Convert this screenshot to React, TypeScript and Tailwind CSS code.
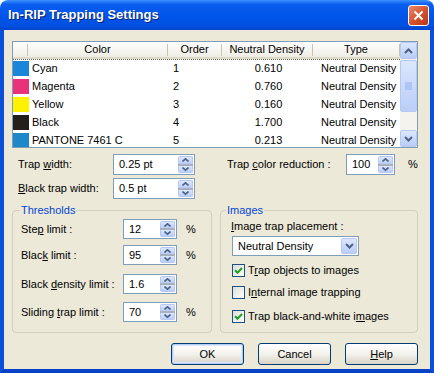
import type { ReactNode } from "react";

type Ink = {
  name: string;
  order: string;
  density: string;
  swatch: string;
};

const inks: Ink[] = [
  { name: "Cyan", order: "1", density: "0.610", swatch: "bg-[#1b86d8]" },
  { name: "Magenta", order: "2", density: "0.760", swatch: "bg-[#e9327a]" },
  { name: "Yellow", order: "3", density: "0.160", swatch: "bg-[#fff200]" },
  { name: "Black", order: "4", density: "1.700", swatch: "bg-[#221f1c]" },
  { name: "PANTONE 7461 C", order: "5", density: "0.213", swatch: "bg-[#1d88c9]" },
];

function Chevron({ dir }: { dir: "up" | "down" }) {
  return (
    <svg width="9" height="6" viewBox="0 0 9 6">
      <path
        d={dir === "up" ? "M1 5 L4.5 1.5 L8 5" : "M1 1 L4.5 4.5 L8 1"}
        fill="none"
        stroke="#4d6185"
        strokeWidth="2"
      />
    </svg>
  );
}

function BlueButton({ children, className }: { children?: ReactNode; className: string }) {
  return (
    <div
      className={`flex items-center justify-center rounded-[2px] border border-[#b6c8f2] bg-gradient-to-b from-[#dce7fe] to-[#b9cdf7] ${className}`}
    >
      {children}
    </div>
  );
}

function Spin() {
  return (
    <div className="flex h-full w-[16px] flex-col py-[1px] pr-[1px]">
      <BlueButton className="flex-1 rounded-b-none border-b-0">
        <svg width="7" height="4" viewBox="0 0 7 4">
          <path d="M0.5 3.5 L3.5 0.8 L6.5 3.5" fill="none" stroke="#4d6185" strokeWidth="1.6" />
        </svg>
      </BlueButton>
      <div className="h-[2px] bg-[#a9b0bd]" />
      <BlueButton className="flex-1 rounded-t-none border-t-0">
        <svg width="7" height="4" viewBox="0 0 7 4">
          <path d="M0.5 0.5 L3.5 3.2 L6.5 0.5" fill="none" stroke="#4d6185" strokeWidth="1.6" />
        </svg>
      </BlueButton>
    </div>
  );
}

function SpinBox({ value, className }: { value: string; className: string }) {
  return (
    <div className={`flex items-center border border-[#7f9db9] bg-white ${className}`}>
      <span className="flex-1 pl-[5px]">{value}</span>
      <Spin />
    </div>
  );
}

function HeaderCell({ className, children }: { className: string; children?: ReactNode }) {
  return (
    <div className={`flex h-full items-center ${className}`}>
      <span className="flex-1 text-center">{children}</span>
      <span className="h-[12px] w-px bg-[#c7c4b1]" />
    </div>
  );
}

function CheckBox({ checked, children }: { checked: boolean; children: ReactNode }) {
  return (
    <div className="flex h-[13px] items-center">
      <span className="flex h-[13px] w-[13px] items-center justify-center border border-[#1c5180] bg-gradient-to-br from-[#dcdcd7] to-white">
        {checked && (
          <svg width="9" height="9" viewBox="0 0 9 9">
            <path d="M1 4.2 L3.5 6.7 L8 2" fill="none" stroke="#21a121" strokeWidth="2" />
          </svg>
        )}
      </span>
      <span className="ml-[3px]">{children}</span>
    </div>
  );
}

function XpButton({ children, primary }: { children: ReactNode; primary?: boolean }) {
  return (
    <div
      className={`flex h-[22px] w-[73px] items-center justify-center rounded-[3px] border border-[#003c74] bg-gradient-to-b from-white via-[#f3f2ec] to-[#d8d3c7] ${
        primary ? "shadow-[inset_0_0_0_1px_#b4cdf4,inset_0_0_0_2px_#d9e6fb]" : ""
      }`}
    >
      {children}
    </div>
  );
}

export default function App() {
  return (
    <div className="flex h-[373px] w-[434px] flex-col bg-white font-['Liberation_Sans',Arial,sans-serif] text-[11px] text-black">
      {/* title bar */}
      <div className="flex h-[30px] items-center justify-between rounded-t-[8px] bg-[linear-gradient(180deg,#3d91ff_0%,#0a5ef0_14%,#0055ea_50%,#0051e2_85%,#0044cc_100%)] pl-[8px] pr-[5px]">
        <span className="text-[13px] font-bold text-white [text-shadow:1px_1px_0_#0a1e6e]">
          In-RIP Trapping Settings
        </span>
        <div className="flex h-[21px] w-[21px] items-center justify-center rounded-[3px] border border-white bg-gradient-to-br from-[#e98a6c] via-[#d5542f] to-[#b83617]">
          <svg width="11" height="11" viewBox="0 0 11 11">
            <path d="M1.5 1.5 L9.5 9.5 M9.5 1.5 L1.5 9.5" stroke="white" strokeWidth="2" />
          </svg>
        </div>
      </div>

      {/* client area */}
      <div className="flex flex-1 flex-col border-x-[4px] border-b-[4px] border-x-[#0a4fd8] border-b-[#0842c6] bg-[#ece9d8] pl-[8px] pt-[11px]">
        {/* list view */}
        <div className="flex h-[107px] w-[406px] border border-[#7f9db9] bg-white">
          <div className="flex w-[387px] flex-col overflow-hidden">
            <div className="flex h-[17px] shrink-0 border-b-[2px] border-[#dcd9c8] bg-gradient-to-b from-white to-[#efede4]">
              <HeaderCell className="w-[15px]" />
              <HeaderCell className="w-[140px]">Color</HeaderCell>
              <HeaderCell className="w-[54px]">Order</HeaderCell>
              <HeaderCell className="w-[91px]">Neutral Density</HeaderCell>
              <HeaderCell className="w-[87px]">Type</HeaderCell>
            </div>
            {inks.map((ink, i) => (
              <div
                key={ink.name}
                className={`flex h-[18px] shrink-0 items-center ${i === 0 ? "border-t border-dotted border-[#6d6d6d]" : ""}`}
              >
                <div className="flex w-[155px] items-center">
                  <span className={`h-[15px] w-[16px] ${ink.swatch}`} />
                  <span className="ml-[3px]">{ink.name}</span>
                </div>
                <div className="w-[54px] pl-[5px]">{ink.order}</div>
                <div className="w-[91px] pl-[2px] text-center">{ink.density}</div>
                <div className="w-[87px] pl-[8px]">Neutral Density</div>
              </div>
            ))}
          </div>
          <div className="flex w-[17px] flex-col bg-[#f4f3ee]">
            <BlueButton className="h-[17px]">
              <Chevron dir="up" />
            </BlueButton>
            <BlueButton className="mt-[1px] h-[52px]">
              <svg width="7" height="8" viewBox="0 0 7 8">
                <path d="M0 1h7M0 3h7M0 5h7M0 7h7" stroke="#8fb0f0" strokeWidth="1" />
              </svg>
            </BlueButton>
            <div className="flex-1" />
            <BlueButton className="h-[17px]">
              <Chevron dir="down" />
            </BlueButton>
          </div>
        </div>

        {/* width settings */}
        <div className="mt-[6px] grid grid-cols-[200px_198px] gap-x-[8px]">
          <div className="flex flex-col gap-[3px]">
            <div className="flex items-center">
              <span className="w-[101px] pl-[6px]">
                Trap <u>w</u>idth:
              </span>
              <SpinBox value="0.25 pt" className="h-[21px] w-[82px]" />
            </div>
            <div className="flex items-center">
              <span className="w-[101px] pl-[6px]">
                <u>B</u>lack trap width:
              </span>
              <SpinBox value="0.5 pt" className="h-[21px] w-[82px]" />
            </div>
          </div>
          <div className="flex h-[21px] items-center">
            <span className="w-[126px] pl-[7px]">
              Trap <u>c</u>olor reduction :
            </span>
            <SpinBox value="100" className="h-[21px] w-[49px]" />
            <span className="ml-[13px]">%</span>
          </div>
        </div>

        {/* group boxes */}
        <div className="mt-[11px] grid grid-cols-[200px_198px] gap-x-[8px]">
          <div className="relative h-[123px] rounded-[4px] border border-[#d0d0bf] pl-[8px] pt-[8px]">
            <span className="absolute -top-[7px] left-[7px] bg-[#ece9d8] px-[1px] leading-[13px] text-[#0046d5]">
              Thresholds
            </span>
            <div className="flex h-[20px] items-center">
              <span className="w-[102px]">
                Ste<u>p</u> limit :
              </span>
              <SpinBox value="12" className="h-[20px] w-[54px]" />
              <span className="ml-[9px]">%</span>
            </div>
            <div className="mt-[6px] flex h-[20px] items-center">
              <span className="w-[102px]">
                Blac<u>k</u> limit :
              </span>
              <SpinBox value="95" className="h-[20px] w-[54px]" />
              <span className="ml-[9px]">%</span>
            </div>
            <div className="mt-[9px] flex h-[20px] items-center">
              <span className="w-[102px]">
                Black <u>d</u>ensity limit :
              </span>
              <SpinBox value="1.6" className="h-[20px] w-[54px]" />
            </div>
            <div className="mt-[8px] flex h-[20px] items-center">
              <span className="w-[102px]">
                Sliding <u>t</u>rap limit :
              </span>
              <SpinBox value="70" className="h-[20px] w-[54px]" />
              <span className="ml-[9px]">%</span>
            </div>
          </div>

          <div className="relative flex h-[123px] flex-col rounded-[4px] border border-[#d0d0bf] pl-[10px] pt-[9px]">
            <span className="absolute -top-[7px] left-[5px] bg-[#ece9d8] px-[1px] leading-[13px] text-[#0046d5]">
              Images
            </span>
            <span className="leading-[13px]">
              <u>I</u>mage trap placement :
            </span>
            <div className="ml-[1px] mt-[3px] flex h-[20px] w-[127px] items-center border border-[#7f9db9] bg-white">
              <span className="flex-1 pl-[5px]">Neutral Density</span>
              <BlueButton className="m-[1px] h-[16px] w-[16px]">
                <Chevron dir="down" />
              </BlueButton>
            </div>
            <div className="ml-[1px] mt-[8px]">
              <CheckBox checked>
                T<u>r</u>ap objects to images
              </CheckBox>
            </div>
            <div className="ml-[1px] mt-[9px]">
              <CheckBox checked={false}>
                I<u>n</u>ternal image trapping
              </CheckBox>
            </div>
            <div className="ml-[1px] mt-[11px]">
              <CheckBox checked>
                Trap black-and-white i<u>m</u>ages
              </CheckBox>
            </div>
          </div>
        </div>

        {/* buttons */}
        <div className="mt-[10px] flex w-[406px] justify-end gap-[14px]">
          <XpButton primary>OK</XpButton>
          <XpButton>Cancel</XpButton>
          <XpButton>
            <span>
              <u>H</u>elp
            </span>
          </XpButton>
        </div>
      </div>
    </div>
  );
}
